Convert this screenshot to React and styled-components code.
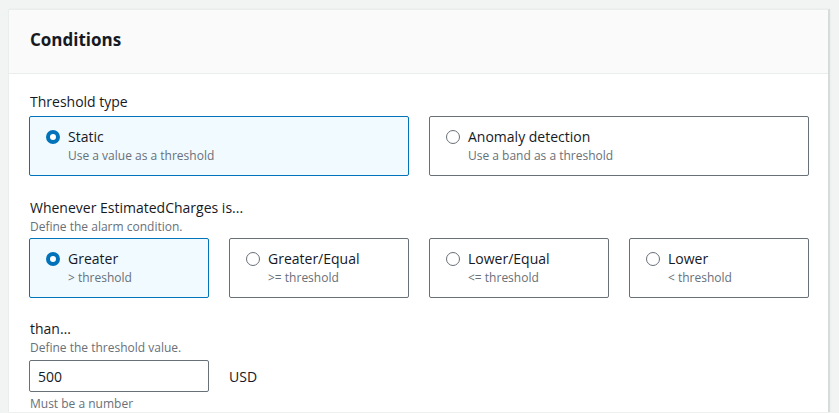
import React from 'react';
import styled, { createGlobalStyle } from 'styled-components';

const GlobalStyle = createGlobalStyle`
  body {
    margin: 0;
    background: #f2f3f3;
    font-family: "Open Sans", "Liberation Sans", sans-serif;
    color: #16191f;
  }
`;

const Page = styled.div`
  padding: 9px 10px 0 8px;
  height: 413px;
  box-sizing: border-box;
  overflow: hidden;
`;

const Panel = styled.section`
  background: #ffffff;
  border: 1px solid #eaeded;
  border-right-color: #d5dbdb;
  border-bottom: none;
  box-shadow: 1px 0 1px rgba(0, 28, 36, 0.1);
`;

const PanelHeader = styled.header`
  background: #fafafa;
  border-bottom: 1px solid #eaeded;
  height: 64px;
  box-sizing: border-box;
  display: flex;
  align-items: center;
  padding: 0 20px 5px 21px;
`;

const Title = styled.h2`
  margin: 0;
  font-size: 17px;
  font-weight: 700;
  color: #16191f;
`;

const Body = styled.div`
  padding: 18px 20px 0 20px;
  display: flex;
  flex-direction: column;
`;

const Field = styled.div`
  display: flex;
  flex-direction: column;
  margin-top: ${(p) => p.$top || 0}px;
`;

const Label = styled.div`
  font-size: 14px;
  line-height: 20px;
  padding-left: 1px;
`;

const Hint = styled.div`
  font-size: 12px;
  line-height: 18px;
  color: #687078;
  padding-left: 1px;
`;

const Tiles = styled.div`
  display: grid;
  grid-template-columns: repeat(${(p) => p.$cols}, ${(p) => p.$width}px);
  gap: 20px;
  margin-top: ${(p) => p.$top}px;
`;

const Tile = styled.div`
  box-sizing: border-box;
  height: 60px;
  border: 1px solid ${(p) => (p.$checked ? '#0073bb' : '#687078')};
  background: ${(p) => (p.$checked ? '#f1faff' : '#ffffff')};
  border-radius: 2px;
  display: flex;
  align-items: flex-start;
  padding: 10px 16px;
  gap: 8px;
`;

const Radio = styled.span`
  box-sizing: border-box;
  flex: none;
  width: 14px;
  height: 14px;
  margin-top: 3px;
  border-radius: 50%;
  border: ${(p) => (p.$checked ? '4px solid #0073bb' : '1.5px solid #687078')};
  background: #ffffff;
`;

const TileText = styled.div`
  display: flex;
  flex-direction: column;
`;

const TileTitle = styled.div`
  font-size: 14px;
  line-height: 20px;
  color: #16191f;
`;

const TileDesc = styled.div`
  font-size: 12px;
  line-height: 18px;
  color: #687078;
`;

const InputRow = styled.div`
  display: flex;
  align-items: center;
  gap: 20px;
  margin-top: 3px;
`;

const Input = styled.input`
  all: unset;
  box-sizing: border-box;
  width: 180px;
  height: 32px;
  border: 1px solid #687078;
  border-radius: 2px;
  padding: 0 8px;
  font-family: inherit;
  font-size: 14px;
  color: #16191f;
`;

const Unit = styled.span`
  font-size: 14px;
`;

const Constraint = styled.div`
  font-size: 12px;
  line-height: 16px;
  color: #687078;
  margin-top: 4px;
  padding-left: 1px;
`;

const TileOption = ({ title, desc, checked }) => (
  <Tile $checked={checked}>
    <Radio $checked={checked} />
    <TileText>
      <TileTitle>{title}</TileTitle>
      <TileDesc>{desc}</TileDesc>
    </TileText>
  </Tile>
);

const comparisons = [
  { title: 'Greater', desc: '> threshold', checked: true },
  { title: 'Greater/Equal', desc: '>= threshold' },
  { title: 'Lower/Equal', desc: '<= threshold' },
  { title: 'Lower', desc: '< threshold' },
];

export default function App() {
  return (
    <>
      <GlobalStyle />
      <Page>
        <Panel>
          <PanelHeader>
            <Title>Conditions</Title>
          </PanelHeader>
          <Body>
            <Field>
              <Label>Threshold type</Label>
              <Tiles $cols={2} $width={380} $top={4}>
                <TileOption title="Static" desc="Use a value as a threshold" checked />
                <TileOption title="Anomaly detection" desc="Use a band as a threshold" />
              </Tiles>
            </Field>
            <Field $top={22}>
              <Label>Whenever EstimatedCharges is...</Label>
              <Hint>Define the alarm condition.</Hint>
              <Tiles $cols={4} $width={180} $top={2}>
                {comparisons.map((c) => (
                  <TileOption key={c.title} {...c} />
                ))}
              </Tiles>
            </Field>
            <Field $top={21}>
              <Label>than…</Label>
              <Hint>Define the threshold value.</Hint>
              <InputRow>
                <Input defaultValue="500" />
                <Unit>USD</Unit>
              </InputRow>
              <Constraint>Must be a number</Constraint>
            </Field>
          </Body>
        </Panel>
      </Page>
    </>
  );
}
